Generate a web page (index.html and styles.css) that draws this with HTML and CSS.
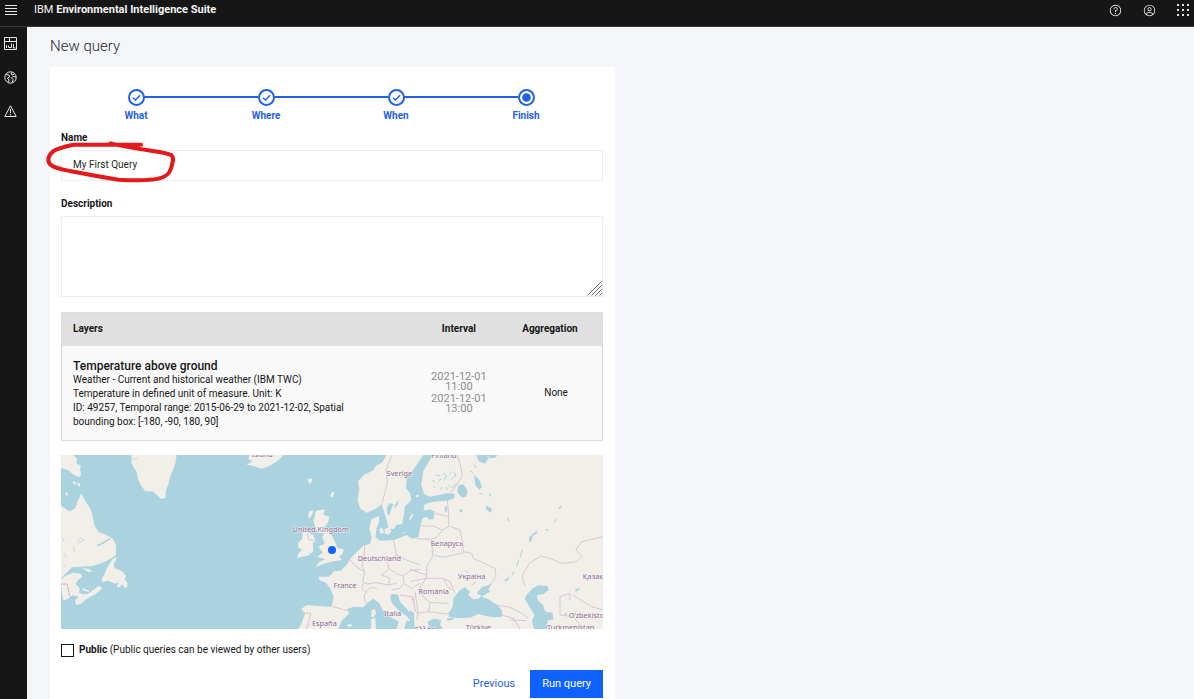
FILE: index.html
```html
<!DOCTYPE html>
<html lang="en">
<head>
<meta charset="utf-8">
<title>IBM Environmental Intelligence Suite</title>
<link rel="stylesheet" href="styles.css">
</head>
<body>
<header class="topbar">
  <button class="icon-btn menu-btn" aria-label="Menu">
    <svg width="12" height="10" viewBox="0 0 12 10" fill="none" stroke="#e8e8e8"><path d="M0 .5h12M0 3.5h12M0 6.5h12M0 9.5h12"/></svg>
  </button>
  <a class="brand" href="#">IBM <b>Environmental Intelligence Suite</b></a>
  <div class="tools">
    <button class="icon-btn" aria-label="Help">
      <svg width="13" height="13" viewBox="0 0 32 32" fill="#f4f4f4"><path d="M16 2a14 14 0 1 0 14 14A14 14 0 0 0 16 2zm0 26a12 12 0 1 1 12-12 12 12 0 0 1-12 12z"/><circle cx="16" cy="23.500" r="1.700"/><path d="M17 8h-1.500a4.500 4.500 0 0 0-4.500 4.500v.5h2v-.5a2.500 2.500 0 0 1 2.500-2.500H17a2.500 2.500 0 0 1 0 5h-2v4.500h2V17a4.500 4.500 0 0 0 0-9z"/></svg>
    </button>
    <button class="icon-btn" aria-label="Account">
      <svg width="13" height="13" viewBox="0 0 32 32" fill="#f4f4f4"><path d="M16 8a5 5 0 1 0 5 5 5 5 0 0 0-5-5zm0 8a3 3 0 1 1 3-3 3 3 0 0 1-3 3z"/><path d="M16 2a14 14 0 1 0 14 14A14 14 0 0 0 16 2zm-6 24.380V25a3 3 0 0 1 3-3h6a3 3 0 0 1 3 3v1.380a11.900 11.900 0 0 1-12 0zm14-1.460A5 5 0 0 0 19 20h-6a5 5 0 0 0-5 4.920 12 12 0 1 1 16 0z"/></svg>
    </button>
    <button class="icon-btn" aria-label="App switcher">
      <svg width="12" height="12" viewBox="0 0 12 12" fill="#e0e0e0"><path d="M0 0h2v2H0zM5 0h2v2H5zM10 0h2v2h-2zM0 5h2v2H0zM5 5h2v2H5zM10 5h2v2h-2zM0 10h2v2H0zM5 10h2v2H5zM10 10h2v2h-2z"/></svg>
    </button>
  </div>
</header>
<div class="shell">
  <nav class="rail" aria-label="Main">
    <a href="#" aria-label="Dashboard"><svg width="13" height="13" viewBox="0 0 13 13" fill="none" stroke="#e8e8e8"><path d="M.5.500h12v12H.5zM.5 4.500h12M5.500.500v4M7.500 6.500v4H4.500v-2M2.500 8v3M9.500 7v4h2"/></svg></a>
    <a href="#" aria-label="Globe"><svg width="13" height="13" viewBox="0 0 13 13" fill="none" stroke="#e8e8e8"><circle cx="6.500" cy="6.500" r="5.700"/><path d="M2 3.500l3 .5.500 2-2 1 1.500 2-.5 2.500M8 1L7 3l2 1 1.500-1.500M12 6L9 5.500 7.500 7 9 8.500l-.5 2.500"/></svg></a>
    <a href="#" aria-label="Alerts"><svg width="13" height="12" viewBox="0 0 13 12" fill="none" stroke="#e8e8e8"><path d="M6.500.800L12.200 11.500H.8zM6.500 4v4M6.500 9v1.300"/></svg></a>
  </nav>
  <main class="content">
    <h1 class="title">New query</h1>
    <div class="columns">
      <form class="card">
        <ol class="steps">
          <li class="step"><svg class="dot" viewBox="0 0 17 17"><circle cx="8.500" cy="8.500" r="7.500"/><path d="M5 8.700l2.500 2.300L12 6.200"/></svg><span>What</span></li>
          <li class="step"><svg class="dot" viewBox="0 0 17 17"><circle cx="8.500" cy="8.500" r="7.500"/><path d="M5 8.700l2.500 2.300L12 6.200"/></svg><span>Where</span></li>
          <li class="step"><svg class="dot" viewBox="0 0 17 17"><circle cx="8.500" cy="8.500" r="7.500"/><path d="M5 8.700l2.500 2.300L12 6.200"/></svg><span>When</span></li>
          <li class="step" aria-current="step"><svg class="dot" viewBox="0 0 17 17"><circle cx="8.500" cy="8.500" r="7.500"/><circle class="fill" cx="8.500" cy="8.500" r="4.300"/></svg><span>Finish</span></li>
        </ol>
        <label class="label" for="name">Name</label>
        <div class="field">
          <input class="input" id="name" type="text" value="My First Query">
          <svg class="scribble" viewBox="0 189 435 144" fill="none" stroke="#e3191c" stroke-width="12" stroke-linecap="round" stroke-linejoin="round"><path d="M288 209L87 209C60 215 40 219 26 228C10 239 6 256 14 266C24 278 45 282 75 288C120 297 170 306 220 314C260 316 310 318 340 311C365 305 374 296 378 280C383 263 388 249 380 241C368 234 340 231 310 226C270 220 230 213 196 205"/></svg>
        </div>
        <label class="label label-desc" for="desc">Description</label>
        <div class="field">
          <textarea class="input area" id="desc"></textarea>
          <svg class="grip" viewBox="0 0 15 15" stroke="#666" fill="none"><path d="M.5 14.500L14.500.500M4.500 14.500l10-10M8.500 14.500l6-6M12.500 14.500l2-2"/></svg>
        </div>
        <table class="layers">
          <thead><tr><th class="c-layer">Layers</th><th class="c-interval">Interval</th><th class="c-agg">Aggregation</th></tr></thead>
          <tbody><tr>
            <td>
              <strong class="layer-name">Temperature above ground</strong>
              <div>Weather - Current and historical weather (IBM TWC)</div>
              <div>Temperature in defined unit of measure. Unit: K</div>
              <div>ID: 49257, Temporal range: 2015-06-29 to 2021-12-02, Spatial<br>bounding box: [-180, -90, 180, 90]</div>
            </td>
            <td class="interval"><time>2021-12-01<br>11:00</time><time>2021-12-01<br>13:00</time></td>
            <td class="agg">None</td>
          </tr></tbody>
        </table>
        <svg class="map" viewBox="0 0 1626 522" preserveAspectRatio="xMidYMid slice" role="img" aria-label="Map of the query area">
          <g transform="translate(-3 -15)" fill="#f2efe9">
            <path d="M0 15h40l12 14-4 10 14 8-2 12 4 14-8 10-16-8-12-12L0 52z"/>
            <path d="M40 94l10 6-2 4-10-5zM52 97l8 6v8l-7-6z"/>
            <path d="M0 165L18 178 30 184 46 174 52 156 64 130 74 150 86 168 94 184 100 206 104 228 116 246 138 254 160 268 168 286 168 314 152 326 128 338 98 348 62 350 36 352 24 364 0 388z"/>
            <path d="M0 390l16-12 24-10 22 3 5 10-14 10-6 10 12 14-2 14 15 4 12-2 20-14 12-10 11 6-9 10-12 10-12 6-14 8-18 14-14 4-3-13 12-12-18-4-16 10-13 6z"/>
            <path d="M66 354l20 2 12 8-12 3zM70 414l18 8-2 4-18-5z"/>
            <path d="M158 327l12-7-2 10-8 15 4 10 12 4 12 6 10 12-4 12 9 11-3 13-8-2-4-8-12 10-6-6 8-10-14 4-18-9-18 3-4-6 9-15 6-16 8-14z"/>
            <path d="M215 15H350L346 40 338 62 330 80 326 100 318 122 316 144 302 146 290 134 276 124 256 124 244 108 234 88 230 66 214 40z"/>
            <g stroke="#aad3df" stroke-width="3" fill="none">
              <path d="M112 287l18-9 20-13" stroke-width="5"/>
              <path d="M52 278l10-14 12 8M55 280l16-10M5 260l8 15M12 310l8 12M40 290l4 16M8 340l10 10M215 30l18-6M18 60l20 14 18 8" stroke-width="2"/>
            </g>
            <path d="M3 402h18l4 16 4 20 12 10" fill="none" stroke="#cbb3c8" stroke-width="3"/>
            <path d="M16 129l6-2 2 8-6 3z"/>
          </g>
          <g transform="translate(507 -15)">
            <g fill="#f2efe9">
              <path d="M60 15H160L150 26 138 36 118 48 96 56 70 48 50 44 68 34 54 26z"/>
              <path d="M232 88l14-3v10l-8 6zM302 132l8-8 3 6-5 12-6-2z"/>
              <path d="M258 182L285 178 280 194 298 200 294 218 282 232 298 246 308 262 318 282 322 294 341 298 338 312 328 318 335 330 300 336 280 342 256 352 268 336 286 328 262 320 278 308 266 290 284 280 276 262 284 250 264 248 258 236 250 212z"/>
              <path d="M218 250L234 246 250 256 256 272 248 280 250 304 236 316 200 324 206 310 216 300 204 292 206 276 216 268zM238 184l12-4-3 14-10 12-3-8z"/>
              <path d="M470 15L456 38 440 46 428 62 402 74 384 94 388 118 383 150 390 175 410 188 435 178 455 162 462 185 470 210 476 235 490 238 500 224 516 222 522 195 524 170 544 150 540 130 528 115 530 85 548 62 564 38 580 15z"/>
              <path d="M205 537L215 520 225 492 214 476 230 465 262 468 305 470 311 440 300 415 288 398 268 390 265 380 298 380 312 364 332 362 352 342 364 322 384 302 402 286 420 282 425 262 418 236 424 208 446 198 448 214 440 234 436 262 450 272 492 270 530 255 546 266 565 262 570 235 578 205 590 200 596 208 610 208 614 185 600 178 580 182 584 162 610 155 650 152 672 145 675 132 650 130 600 140 582 132 574 105 580 62 600 30 606 15H1130V537H554L552 500 535 482 510 455 504 434 484 432 480 445 490 465 510 485 530 498 545 515 530 512 522 537H500L506 515 480 500 458 480 448 460 430 446 412 458 400 472 372 470 352 476 358 490 335 512 325 537z"/>
              <path d="M424 482l10-6 4 14-6 12-8-2zM424 506l12-2 2 33h-16zM350 526l12-4 6 4-10 6zM448 236l10-2 4 14-10 4zM464 238l14-8 6 14-8 10-12-4zM538 204l10-14 2 6-10 18zM556 138l8-5 4 5-6 4zM516 250l6-5 2 6z"/>
            </g>
            <g fill="#aad3df">
              <path d="M470 174l8-14 12 2-8 20-4 14-5-2zM494 166l12-16-2 12-10 14z"/>
            </g>
            <g transform="translate(540 0)" fill="#aad3df">
              <path d="M198 15h34l2 12-10 14-16-6zM236 15h26l-6 8-20 2zM144 107l16-4 12 18-2 18-14 4-14-16zM192 75l16 14 8 22-8 8-12-14zM228 166l18 10-4 12-14-10zM150 178l8 2-4 8-6-4zM106 168l6 4-2 16-6-6zM238 130l6 6-6 5z"/>
              <path d="M150 420L165 412 180 425 175 435 190 448 205 446 215 438 200 430 215 412 245 402 235 418 240 425 215 440 235 448 262 465 276 482 276 500 250 502 225 497 205 492 180 503 150 505 118 500 115 490 128 470 130 445z"/>
              <path d="M368 415L385 406 412 408 416 420 400 432 380 436 384 452 400 466 402 478 408 486 428 488 430 508 412 512 412 537H372L366 512 374 495 358 470 344 445 350 435z"/>
              <path d="M0 480L12 490 12 537H0zM54 514l18-8 22 4-4 14 8 13H56zM110 506l20-4 2 6-20 5z"/>
              <path d="M358 262l14-14 10-5-2 8-12 6-1 8-5 12-5-4zM406 236l12 3-4 3-8-1zM432 214l10-10-4 8-8 6zM446 174l8-8v6l-8 7zM284 390l14-11-4 12-10 5zM496 418l14-5-4 8-10 5zM462 492l10-5-6 10zM292 205l4-2 2 14-4-4zM160 358l16 10-4 2z"/>
              <g fill="none" stroke="#aad3df" stroke-width="3" stroke-linecap="round">
                <path d="M78 75l10 2M68 92l6 3M86 92l8-5M102 70l7 9M102 90l6-10M114 104l8 8M122 90l10-10M128 112l8-10M134 68l3 12M108 112l5 7M90 120l5-7M72 110l4 3M120 70l5-5M193 45l6 8M182 64l6 4M210 130l6 3M336 300l-5 20M326 330l-6 20M312 364l-6 12M186 404l10-6"/>
              </g>
            </g>
            <g fill="none" stroke="#d8c6d5" stroke-width="3" stroke-linejoin="round">
              <path d="M486 15L468 60 472 100 456 160M404 284L402 320 385 335M360 330L385 355 404 365M402 322L396 345 404 365 398 395 412 402M400 400L395 415 408 425 402 440 408 460M412 402L440 398 475 405 500 400M490 270L500 315 470 335 478 355 455 375 480 385 475 405M500 315L530 330 570 345M478 355L500 372 520 378 540 362 570 358M520 378L522 398 510 415 485 420M440 415L420 412 410 425M520 400L545 415 570 400M510 435L545 440 552 465M550 440L555 480 565 495M308 470L355 482M218 488L242 490 236 515 230 537M232 250L236 268 252 272"/>
              <path transform="translate(540 0)" d="M142 15L150 40 157 75 140 105 120 130M112 150L116 195 116 225M75 190L116 200M35 228L70 228 98 240 118 228 150 240 158 275 160 305 185 310 190 325 255 355 258 380 240 405M98 240L80 262 64 268 20 266M64 268L68 315 100 322 160 308M68 318L50 350 50 375 0 358M50 375L48 385 25 420 45 445 60 458 115 460M0 395L48 385 100 385 120 395 135 430M15 425L20 460 25 490 20 510M25 490L55 485 60 460M55 485L115 492M100 385L112 410 125 420M258 465L300 472 335 490 355 505M275 495L310 505 330 537M300 510L350 512M345 408L336 378 358 340 392 318 420 325 455 340 500 335 515 320 498 300 515 275 580 260M450 495L450 440 480 430 480 450M490 435L520 455 545 470 580 480M450 495L490 500 520 537"/>
            </g>
            <circle cx="306" cy="300" r="12" fill="#0f62fe"/>
            <g class="places">
              <text x="97" y="22">Ísland</text>
              <text x="508" y="78">Sverige</text>
              <text x="642" y="25">Finland</text>
              <text x="272" y="246">United Kingdom</text>
              <text x="448" y="334">Deutschland</text>
              <text x="345" y="413">France</text>
              <text x="488" y="498">Italia</text>
              <text x="283" y="528">España</text>
              <text x="651" y="287">Беларусь</text>
              <text x="725" y="388">Україна</text>
              <text x="611" y="431">România</text>
              <text x="584" y="545">Ελλάς</text>
              <text x="745" y="541">Türkiye</text>
              <text x="1022" y="541">Turkmenistan</text>
              <text x="1016" y="505" class="start">O‘zbekiston</text>
              <text x="1058" y="388" class="start">Қазақстан</text>
            </g>
          </g>
        </svg>
        <label class="public"><input class="check" type="checkbox"><span><b>Public</b> (Public queries can be viewed by other users)</span></label>
        <div class="actions">
          <button class="btn btn-ghost" type="button">Previous</button>
          <button class="btn btn-primary" type="button">Run query</button>
        </div>
      </form>
    </div>
  </main>
</div>
</body>
</html>
```
FILE: styles.css
```css
* { box-sizing: border-box; }
body {
  margin: 0;
  min-height: 100vh;
  display: flex;
  flex-direction: column;
  background: #f4f6fa;
  color: #161616;
  font: 10px/14px Roboto, "Liberation Sans", sans-serif;
}
button { border: 0; padding: 0; background: none; font: inherit; }
svg { display: block; }
.topbar {
  display: flex;
  align-items: center;
  height: 27px;
  padding: 0 5px 6px;
  background: #161616;
  border-bottom: 1px solid #393939;
}
.brand {
  margin-left: 17px;
  color: #f4f4f4;
  font-size: 11px;
  text-decoration: none;
}
.tools { display: flex; align-items: center; gap: 21px; margin-left: auto; }
.shell { display: flex; flex: 1; }
.rail {
  display: flex;
  flex-direction: column;
  gap: 21px;
  width: 27px;
  padding: 10px 4px;
  background: #161616;
}
.content { flex: 1; padding: 11px 0 0 23px; }
.title {
  margin: 0 0 12px;
  color: #262626;
  font: 300 15px/17px Roboto, sans-serif;
}
.columns { display: grid; grid-template-columns: 1fr 1fr; gap: 14px; }
.card { padding: 22px 12px 2px 11px; background: #fff; }
.steps {
  display: grid;
  grid-template-columns: repeat(4, 1fr);
  margin: 0 12px 0 10px;
  padding: 0;
  list-style: none;
}
.step {
  position: relative;
  display: flex;
  flex-direction: column;
  align-items: center;
  gap: 3px;
  color: #1f62e6;
  font-weight: 700;
}
.step + .step::before {
  content: "";
  position: absolute;
  top: 7px;
  right: calc(50% + 8px);
  width: calc(100% - 16px);
  height: 2px;
  background: #1f62e6;
}
.dot { width: 17px; height: 17px; fill: none; stroke: #1f62e6; stroke-width: 2; }
.dot path { stroke-width: 1.500; }
.dot .fill { fill: #1f62e6; stroke: none; }
.label { display: block; margin: 8px 0 5px; font-weight: 700; }
.label-desc { margin-top: 16px; }
.field { position: relative; }
.input {
  display: block;
  width: 100%;
  height: 31px;
  padding: 0 11px 2px;
  border: 1px solid #eeeeee;
  background: #fff;
  color: #262626;
  font: inherit;
}
.area { height: 81px; padding: 8px 11px; resize: none; }
.scribble { position: absolute; top: -12px; left: -16px; width: 145px; height: 48px; pointer-events: none; }
.grip { position: absolute; right: 1px; bottom: 1px; width: 15px; height: 15px; }
.layers {
  width: 100%;
  margin: 15px 0 14px;
  border: 1px solid #dcdcdc;
  border-spacing: 0;
  background: #f9f9f9;
  table-layout: fixed;
}
.layers th { height: 33px; padding: 0 12px 1px; background: #e0e0e0; text-align: left; }
.layers td { height: 94px; padding: 0 0 0 11px; }
.layers .c-layer { width: 64%; padding-left: 11px; }
.layers .c-interval { width: 19%; text-align: center; }
.layers .interval { padding: 0; color: #8d8d8d; font-size: 11px; line-height: 10px; text-align: center; }
.interval time { display: block; }
.interval time + time { margin-top: 2px; }
.layers .agg { padding: 0; text-align: center; }
.layer-name { display: block; padding-top: 1px; font-size: 12px; font-weight: 500; }
.map { width: 100%; height: auto; background: #aad3df; }
.places {
  fill: #8a6a91;
  stroke: #f7f4f2;
  stroke-width: 3px;
  paint-order: stroke;
  font: 22px "Noto Sans", sans-serif;
  text-anchor: middle;
}
.places .start { text-anchor: start; }
.public { display: flex; align-items: center; gap: 5px; margin-top: 14px; }
.check { appearance: none; width: 13px; height: 13px; margin: 0; border: 1px solid #161616; background: #fff; }
.actions { display: flex; justify-content: flex-end; gap: 3px; margin-top: 13px; font-size: 11px; }
.btn { height: 28px; padding: 0 12px; }
.btn-ghost { color: #1f62e6; }
.btn-primary { background: #0f62fe; color: #fff; }
```
